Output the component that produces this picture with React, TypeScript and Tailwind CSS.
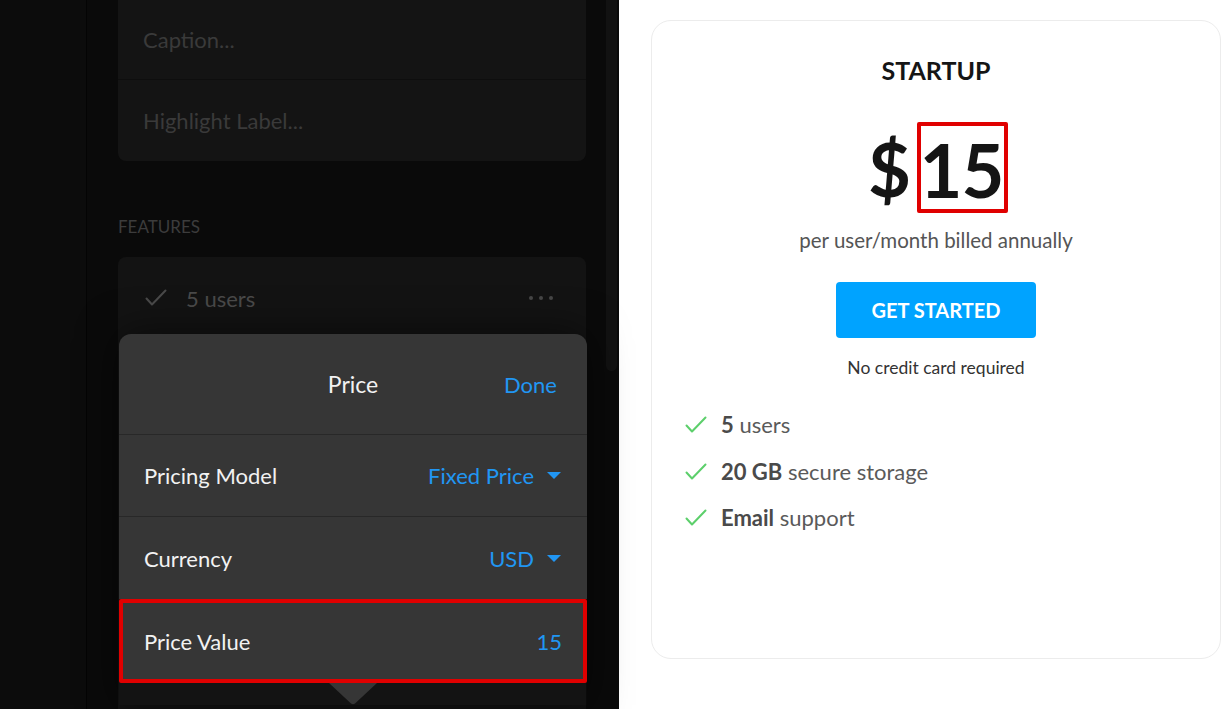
import { useState } from "react";

const features = [
    { bold: "5", rest: "users" },
    { bold: "20 GB", rest: "secure storage" },
    { bold: "Email", rest: "support" },
];

function Caret() {
    return (
        <svg width="16" height="9" viewBox="0 0 16 9" className="ml-3 shrink-0">
            <path d="M1 1h14L8 8z" fill="#2196f3" />
        </svg>
    );
}

function GreenCheck() {
    return (
        <svg width="22" height="18" viewBox="0 0 22 18" className="shrink-0">
            <path d="M1.5 9.5l5.5 6L20.5 1.5" fill="none" stroke="#5ccf6b" strokeWidth="2" strokeLinecap="round" strokeLinejoin="round" />
        </svg>
    );
}

function PricePopover() {
    const [done, setDone] = useState(false);

    return (
        <div className="absolute left-[119px] top-[334px] w-[468px] shadow-[0_0_40px_rgba(0,0,0,0.55)] rounded-t-[12px]">

            {/* Header */}

            <div className="relative flex h-[101px] items-center justify-center rounded-t-[12px] border-b border-[#282828] bg-[#363636]">
                <span className="text-[23px] text-[#f2f2f2]">Price</span>
                <button
                    onClick={() => setDone((d) => !d)}
                    className="absolute right-[30px] text-[22px] text-[#2196f3]"
                >
                    {done ? "Done" : "Done"}
                </button>
            </div>

            <div className="flex h-[82px] items-center justify-between border-b border-[#282828] bg-[#363636] pl-[25px] pr-[25px]">
                <span className="text-[22px] text-[#f2f2f2]">Pricing Model</span>
                <span className="flex items-center text-[22px] text-[#2196f3]">
                    Fixed Price
                    <Caret />
                </span>
            </div>

            <div className="flex h-[82px] items-center justify-between bg-[#363636] pl-[25px] pr-[25px]">
                <span className="text-[22px] text-[#f2f2f2]">Currency</span>
                <span className="flex items-center text-[22px] text-[#2196f3]">
                    USD
                    <Caret />
                </span>
            </div>

            <div className="flex h-[84px] items-center justify-between rounded-[2px] border-[4px] border-[#e00000] bg-[#363636] pl-[21px] pr-[21px]">
                <span className="text-[22px] text-[#f2f2f2]">Price Value</span>
                <span className="text-[22px] text-[#2196f3]">15</span>
            </div>

            {/* Arrow */}

            <div className="flex justify-center">
                <svg width="48" height="22" viewBox="0 0 48 22">
                    <path d="M0 0h48L26 20.5q-2 1.5-4 0z" fill="#363636" />
                </svg>
            </div>

        </div>
    );
}

export default function App() {
    return (
        <div
            className="relative flex h-[709px] w-[1223px] overflow-hidden bg-white"
            style={{ fontFamily: "Lato, 'Noto Sans', sans-serif" }}
        >

            {/* Left editor (dimmed) */}

            <div className="flex h-full w-[619px] shrink-0 bg-[#0a0a0a]">

                <div className="h-full w-[87px] shrink-0 border-r border-[#040404] bg-[#0c0c0c]" />

                <div className="flex h-full flex-1 pl-[31px]">

                    <div className="w-[468px] shrink-0">

                        <div className="rounded-b-[8px] bg-[#141414]">
                            <div className="flex h-[80px] items-center border-b border-[#0e0e0e] px-[25px] text-[22px] text-[#3a3a3a]">
                                Caption...
                            </div>
                            <div className="flex h-[81px] items-center px-[25px] text-[22px] text-[#3a3a3a]">
                                Highlight Label...
                            </div>
                        </div>

                        <div className="mt-[56px] text-[17px] leading-[20px] text-[#3c3c3c]">
                            FEATURES
                        </div>

                        <div className="mt-[20px] h-[460px] rounded-t-[8px] bg-[#131313]">
                            <div className="flex h-[82px] items-center px-[27px]">
                                <svg width="22" height="18" viewBox="0 0 22 18" className="shrink-0">
                                    <path d="M1.5 9.5l5.5 6L20.5 1.5" fill="none" stroke="#4a4a4a" strokeWidth="2" strokeLinecap="round" strokeLinejoin="round" />
                                </svg>
                                <span className="ml-[19px] text-[22px] text-[#4a4a4a]">5 users</span>
                                <span className="ml-auto mr-[6px] flex gap-[6px]">
                                    <span className="h-[4px] w-[4px] rounded-full bg-[#474747]" />
                                    <span className="h-[4px] w-[4px] rounded-full bg-[#474747]" />
                                    <span className="h-[4px] w-[4px] rounded-full bg-[#474747]" />
                                </span>
                            </div>
                        </div>

                    </div>

                    <div className="ml-[20px] h-[371px] w-[11px] shrink-0 rounded-b-[6px] bg-[#121212]" />

                </div>

            </div>

            {/* Right preview */}

            <div className="flex-1 bg-white pl-[32px] pt-[20px]">

                <div className="flex h-[639px] w-[570px] flex-col items-center rounded-[20px] border border-[#ececec] bg-white">

                    <h2 className="mt-[36px] text-[25px] font-bold leading-[26px] text-[#151515]">
                        STARTUP
                    </h2>

                    <div className="mt-[39px] flex h-[91px] items-center pl-[4px] text-[74px] font-bold leading-none text-[#151515]">
                        <span className="mr-[6px] pt-[2px]">$</span>
                        <span className="flex h-[91px] w-[91px] items-center justify-center rounded-[2px] border-[4px] border-[#e00000] pt-[4px] pr-[2px] tracking-[-1px]">
                            15
                        </span>
                    </div>

                    <p className="mt-[15px] text-[20.5px] leading-[25px] text-[#555]">
                        per user/month billed annually
                    </p>

                    <button className="mt-[29px] flex h-[56px] w-[200px] items-center justify-center rounded-[4px] bg-[#00a3ff] text-[20px] font-bold text-white">
                        GET STARTED
                    </button>

                    <p className="mt-[19px] text-[17.5px] leading-[22px] text-[#333]">
                        No credit card required
                    </p>

                    <ul className="mt-[33px] flex w-full flex-col gap-[20.5px] pl-[33px]">
                        {features.map((f) => (
                            <li key={f.bold} className="flex items-center text-[22px] leading-[26px] text-[#5a5a5a]">
                                <GreenCheck />
                                <span className="ml-[14px]">
                                    <b className="font-bold text-[#4a4a4a]">{f.bold}</b> {f.rest}
                                </span>
                            </li>
                        ))}
                    </ul>

                </div>

            </div>

            <PricePopover />

        </div>
    );
}
